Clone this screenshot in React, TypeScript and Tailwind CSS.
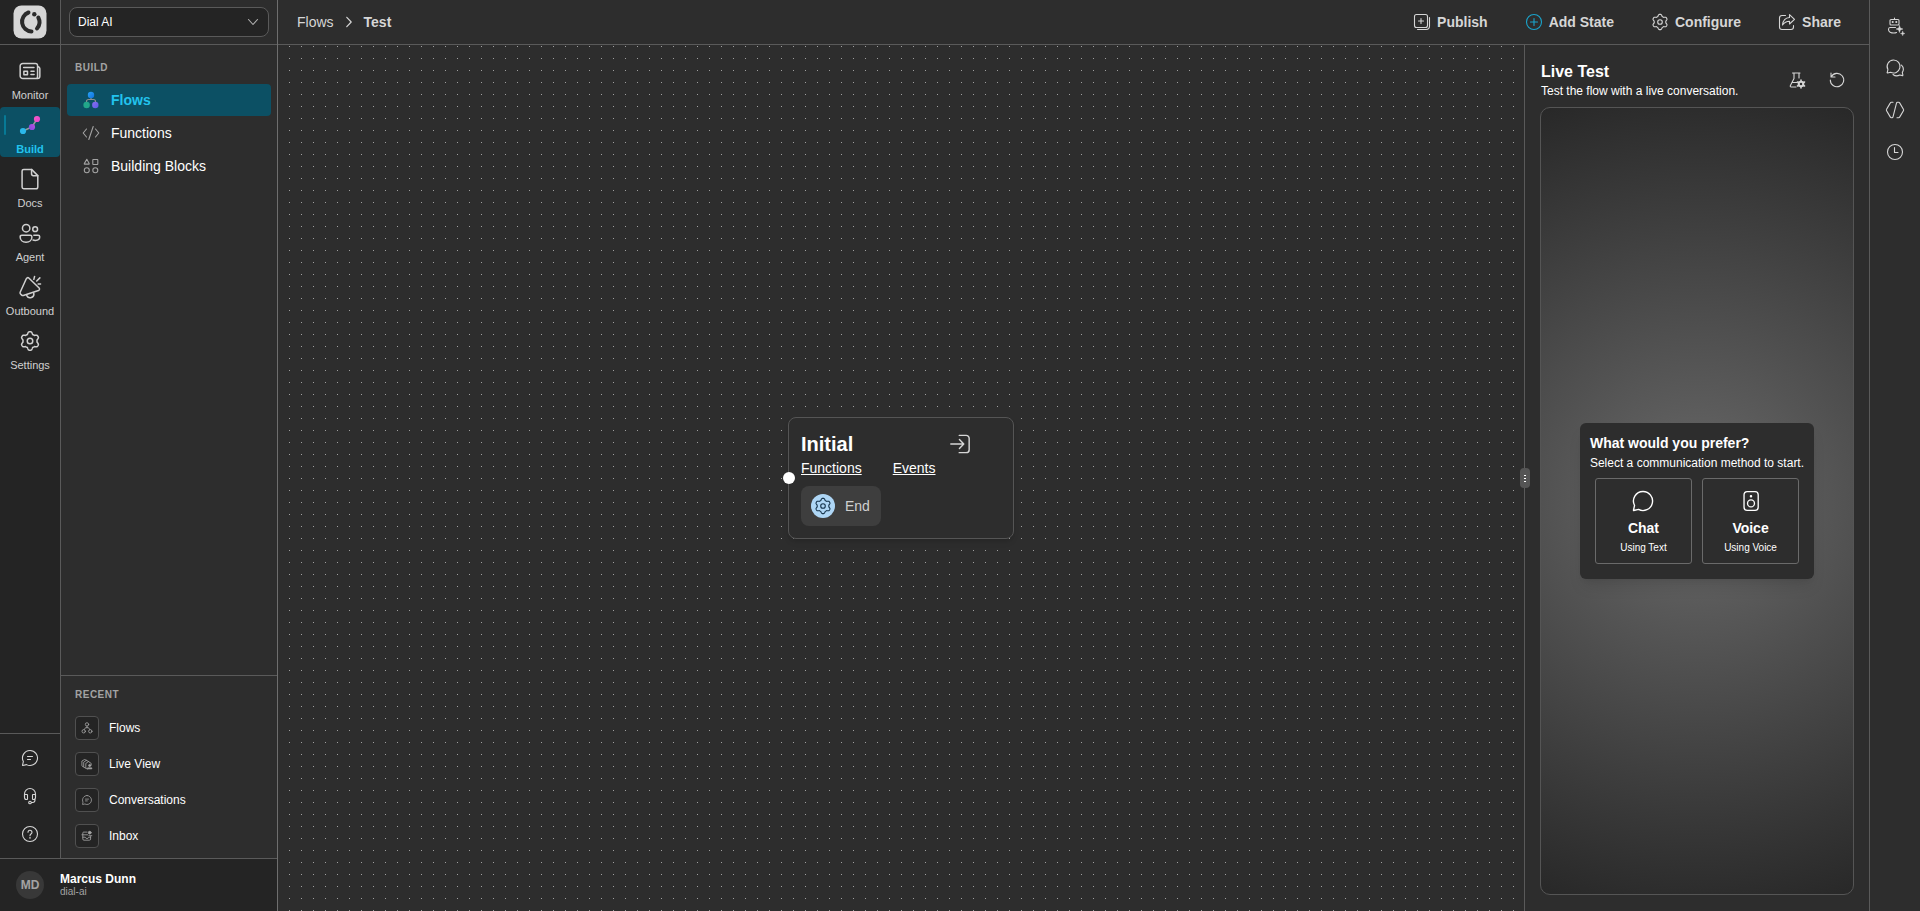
import { ReactNode } from 'react';
import { clsx } from 'clsx';

// six rounded lobes around the centre of a 20x20 box
const GEAR =
  Array.from({ length: 90 }, (_, i) => {
    const angle = (i * 4 * Math.PI) / 180;
    const lobe = Math.max(-1, Math.min(1, -1.5 * Math.cos(6 * angle)));
    const radius = 6.75 + 0.9 * lobe;
    const x = 10 + radius * Math.cos(angle);
    const y = 10 + radius * Math.sin(angle);
    return `${i === 0 ? 'M' : 'L'}${x.toFixed(2)} ${y.toFixed(2)}`;
  }).join('') + 'Z';
const BUBBLE =
  'M10 2.5a7.5 7.5 0 1 1-3.5 14.13l-3.75.86a.2.2 0 0 1-.24-.24l.86-3.75A7.5 7.5 0 0 1 10 2.5Z';

type IconProps = { className?: string; width?: number; children: ReactNode };

function Icon({ className = 'size-5', width = 1.1, children }: IconProps) {
  return (
    <svg
      viewBox="0 0 20 20"
      fill="none"
      stroke="currentColor"
      strokeWidth={width}
      strokeLinecap="round"
      strokeLinejoin="round"
      className={clsx('shrink-0', className)}
      aria-hidden="true"
    >
      {children}
    </svg>
  );
}

function GearIcon({ className, width }: { className?: string; width?: number }) {
  return (
    <Icon className={className} width={width}>
      <path d={GEAR} />
      <circle cx="10" cy="10" r="2.3" />
    </Icon>
  );
}

function BuildIcon() {
  return (
    <svg viewBox="0 0 24 24" className="size-6" aria-hidden="true">
      <defs>
        <linearGradient id="pink" x1="0" y1="0" x2="1" y2="1">
          <stop offset="0" stopColor="#fb5fc4" />
          <stop offset="1" stopColor="#e23fd0" />
        </linearGradient>
        <linearGradient id="violet" x1="0" y1="1" x2="1" y2="0">
          <stop offset="0" stopColor="#7a4be0" />
          <stop offset="1" stopColor="#c04fe0" />
        </linearGradient>
      </defs>
      <path d="M5 18l9-4 5-8" fill="none" stroke="#9a9a9a" strokeWidth="1.5" />
      <circle cx="5" cy="18" r="3.1" fill="#2bb8ea" />
      <circle cx="14" cy="14" r="3.1" fill="url(#violet)" />
      <circle cx="19" cy="6" r="3.1" fill="url(#pink)" />
    </svg>
  );
}

function FlowsIcon() {
  return (
    <svg viewBox="0 0 20 20" className="size-5 shrink-0" aria-hidden="true">
      <defs>
        <linearGradient id="blue" x1="0" y1="0" x2="1" y2="1">
          <stop offset="0" stopColor="#2aa4f4" />
          <stop offset="1" stopColor="#0f6fe0" />
        </linearGradient>
        <linearGradient id="indigo" x1="0" y1="0" x2="1" y2="1">
          <stop offset="0" stopColor="#8a6cf0" />
          <stop offset="1" stopColor="#5b5be6" />
        </linearGradient>
      </defs>
      <path
        d="M10 7v3M5.5 13v-1.5a2 2 0 0 1 2-2h5a2 2 0 0 1 2 2V13"
        fill="none"
        stroke="#8f8f8f"
        strokeWidth="1.2"
      />
      <circle cx="10" cy="5" r="3.2" fill="url(#blue)" />
      <circle cx="5.6" cy="15" r="3.2" fill="#22a68a" />
      <circle cx="14.3" cy="15" r="3.2" fill="url(#indigo)" />
    </svg>
  );
}

const railItems = [
  {
    label: 'Monitor',
    icon: (
      <Icon className="size-6" width={1.25}>
        <path d="M4 3.7h10.5A1.8 1.8 0 0 1 16.3 5.5v9a1.8 1.8 0 0 0 0 1.8H4A2.2 2.2 0 0 1 1.8 14.1V5.9A2.2 2.2 0 0 1 4 3.7ZM16.3 6.3a1.9 1.9 0 0 1 1.9 1.9v6.2a1.9 1.9 0 0 1-1.9 1.9" />
        <path d="M4.7 7h8.6M10.8 10.2h2.6M10.8 13h2.6M4.9 10.2h3v2.9h-3z" />
      </Icon>
    ),
  },
  { label: 'Build', icon: <BuildIcon />, active: true },
  {
    label: 'Docs',
    icon: (
      <Icon className="size-6" width={1.25}>
        <path d="M4.800 2H11.300l5.200 5.200v9.400a1.500 1.500 0 0 1-1.500 1.500H4.800a1.400 1.400 0 0 1-1.400-1.400V3.400A1.400 1.400 0 0 1 4.800 2Z" />
        <path d="M11.300 2v3.800a1.400 1.400 0 0 0 1.400 1.400h3.800" />
      </Icon>
    ),
  },
  {
    label: 'Agent',
    icon: (
      <Icon className="size-6" width={1.25}>
        <circle cx="6.800" cy="6" r="3.100" />
        <circle cx="14.300" cy="6.800" r="2" />
        <path d="M3.300 11.900h6.900c.8 0 1.400.6 1.400 1.400 0 2.600-2 4.400-4.900 4.400s-4.900-1.800-4.900-4.400c0-.8.7-1.400 1.500-1.400Z" />
        <path d="M13.200 11.900h3.500c.8 0 1.400.6 1.400 1.300 0 1.900-1.500 3-3.700 3-.7 0-1.300-.1-1.900-.3" />
      </Icon>
    ),
  },
  {
    label: 'Outbound',
    icon: (
      <Icon className="size-6" width={1.25}>
        <path
          d="M9.500 2.700 18.100 11a1.300 1.300 0 0 1-.5 2.100l-12.700 4.200a1.300 1.300 0 0 1-1.300-.3l-1-1a1.300 1.300 0 0 1-.3-1.400L7.500 3.100a1.300 1.300 0 0 1 2-.4Z"
          transform="translate(-.5 -.2)"
        />
        <path d="M7.300 17.200a3.100 3.100 0 0 0 5.800-2.100M13.200 3.600l.6-2.300M15.600 5l2.600-2.600M16.800 7.400h2" />
      </Icon>
    ),
  },
  { label: 'Settings', icon: <GearIcon className="size-6" width={1.25} /> },
];

const helpItems = [
  {
    label: 'Feedback',
    icon: (
      <Icon>
        <path d={BUBBLE} />
        <path d="M7.5 8.5h5M7.5 11.5h3" />
      </Icon>
    ),
  },
  {
    label: 'Support',
    icon: (
      <Icon>
        <path d="M4.500 11V8a5.500 5.500 0 0 1 11 0v3" />
        <path d="M4.500 8.500H7c.3 0 .5.2.5.5v4a.5.5 0 0 1-.5.5h-.5a2 2 0 0 1-2-2zM15.500 8.500H13a.5.5 0 0 0-.5.5v4c0 .3.2.5.5.5h.5a2 2 0 0 0 2-2zM15 13v1a2.500 2.500 0 0 1-2.500 2.500h-1" />
        <circle cx="10" cy="16.500" r="1.300" />
      </Icon>
    ),
  },
  {
    label: 'Help',
    icon: (
      <Icon>
        <circle cx="10" cy="10" r="7.500" />
        <path d="M8 8.200a2 2 0 1 1 3.200 1.600c-.7.5-1.200 1-1.200 1.900" />
        <circle cx="10" cy="13.800" r=".3" fill="currentColor" />
      </Icon>
    ),
  },
];

const buildLinks = [
  { label: 'Flows', icon: <FlowsIcon />, active: true },
  {
    label: 'Functions',
    icon: (
      <Icon>
        <path d="m5.500 6-3.300 4 3.300 4M14.500 6l3.300 4-3.300 4M12.200 3.500 7.800 16.500" />
      </Icon>
    ),
  },
  {
    label: 'Building Blocks',
    icon: (
      <Icon>
        <path d="M5.800 3.300 8.200 7.600a.3.3 0 0 1-.3.5H3.600a.3.3 0 0 1-.3-.5ZM12.300 3.500h4c.3 0 .5.2.5.5v4a.5.5 0 0 1-.5.5h-4a.5.5 0 0 1-.5-.5V4c0-.3.2-.5.5-.5Z" />
        <circle cx="5.800" cy="14.300" r="2.500" />
        <circle cx="14.300" cy="14.300" r="2.500" />
      </Icon>
    ),
  },
];

const recentLinks = [
  {
    label: 'Flows',
    icon: (
      <Icon className="size-3" width={1.4}>
        <circle cx="10" cy="4" r="2.800" />
        <circle cx="4.500" cy="15.500" r="2.800" />
        <circle cx="15.500" cy="15.500" r="2.800" />
        <path d="M10 7v2.500M5.500 12.500l2-3h5l2 3" />
      </Icon>
    ),
  },
  {
    label: 'Live View',
    icon: (
      <Icon className="size-3" width={1.4}>
        <path d="M4 15 1.500 13V5L6 2.500 9.500 4M7.500 17 4.500 15V7L9 4l4 2M10.500 18.500 8 17V9l4.500-3 4.500 3v2" />
        <circle cx="14.500" cy="12.500" r="1.800" fill="currentColor" />
        <path d="M11.500 16.500h6.500v1.500h-6.500z" fill="currentColor" />
      </Icon>
    ),
  },
  {
    label: 'Conversations',
    icon: (
      <Icon className="size-3" width={1.3}>
        <path d={BUBBLE} />
        <path d="M7.500 8.500h5M7.500 11.500h3" />
      </Icon>
    ),
  },
  {
    label: 'Inbox',
    icon: (
      <Icon className="size-3" width={1.4}>
        <path d="M10 3.500H4.500A1.500 1.500 0 0 0 3 5v10a2 2 0 0 0 2 2h9a2 2 0 0 0 2-2v-4M3 12h4l1.500 2h3L13 12h3M6 8h5M1.500 8H5" />
        <circle cx="14.500" cy="4.500" r="2.300" fill="currentColor" />
        <path d="M13 9.500h5" />
      </Icon>
    ),
  },
];

const headerActions = [
  {
    label: 'Publish',
    icon: (
      <Icon>
        <path d="M4.500 2.500h9a2 2 0 0 1 2 2v9a2 2 0 0 1-2 2h-9a2 2 0 0 1-2-2v-9c0-1.100.9-2 2-2ZM9 6.500v5M6.500 9h5" />
        <path d="M17.500 5.500v8.500a3.500 3.500 0 0 1-3.500 3.500H5.500" />
      </Icon>
    ),
  },
  {
    label: 'Add State',
    icon: (
      <Icon className="size-5 text-[#1aa4cc]">
        <circle cx="10" cy="10" r="7.500" />
        <path d="M10 6.500v7M6.500 10h7" />
      </Icon>
    ),
  },
  { label: 'Configure', icon: <GearIcon /> },
  {
    label: 'Share',
    icon: (
      <Icon>
        <path d="M8.500 3.500H5A2.500 2.500 0 0 0 2.500 6v9A2.500 2.500 0 0 0 5 17.500h9a2.500 2.500 0 0 0 2.500-2.500v-1.500" />
        <path d="M12.500 2.700v2.800C8.500 5.700 6 8.200 5.500 13c1.800-2.600 4-3.800 7-3.800V12l5-4.700Z" />
      </Icon>
    ),
  },
];

const toolItems = [
  {
    label: 'Assistant',
    icon: (
      <Icon>
        <path d="M11.500 16.500c-.6.300-1.500.5-2.500.5-3 0-5.500-1-5.500-3.500 0-1 .6-2 1.500-2h5.500M6 3.500h7a1 1 0 0 1 1 1V8a1 1 0 0 1-1 1H6a1 1 0 0 1-1-1V4.500a1 1 0 0 1 1-1ZM9.500 3.500V2" />
        <circle cx="7.700" cy="6" r=".5" fill="currentColor" />
        <circle cx="11.300" cy="6" r=".5" fill="currentColor" />
        <path
          d="M14.500 9.500l.9 2.600 2.600.9-2.600.9-.9 2.600-.9-2.600-2.600-.9 2.600-.9ZM17.700 15.300l.6 1.600 1.600.6-1.600.6-.6 1.600-.6-1.600-1.600-.6 1.600-.6Z"
          fill="currentColor"
          strokeWidth=".4"
        />
      </Icon>
    ),
  },
  {
    label: 'Chats',
    icon: (
      <Icon>
        <path d="M8.500 2a6.500 6.500 0 1 1-2.900 12.300l-3 .7a.3.3 0 0 1-.4-.4l.7-3A6.500 6.500 0 0 1 8.500 2Z" />
        <path d="M16.500 7.200a5.800 5.800 0 0 1 .8 7.200l.6 2.800a.3.3 0 0 1-.4.4l-2.800-.6A6 6 0 0 1 8 16.500" />
      </Icon>
    ),
  },
  {
    label: 'Variables',
    icon: (
      <Icon>
        <path d="M8 2.300H6.500a1.500 1.500 0 0 0-1.300.8L1.600 9.300a1.300 1.300 0 0 0 0 1.400l3.600 6.200c.3.500.8.800 1.300.8h.5c.5 0 .9-.3 1-.8L11.500 3.100c.1-.5.500-.8 1-.8h1c.5 0 1 .3 1.300.8l3.600 6.200c.3.400.3 1 0 1.400l-3.600 6.200c-.3.500-.8.800-1.300.8H12" />
      </Icon>
    ),
  },
  {
    label: 'History',
    icon: (
      <Icon>
        <circle cx="10" cy="10" r="7.500" />
        <path d="M9.500 5.500v5h3.500" />
      </Icon>
    ),
  },
];

function Logo() {
  return (
    <svg viewBox="0 0 34 34" className="size-[34px]" aria-hidden="true">
      <rect x=".5" y=".5" width="33" height="33" rx="8" fill="#d6d6d6" />
      <g fill="none" stroke="#2b2b2b" strokeWidth="4" strokeLinecap="round">
        <path d="M15.500 7.500A9.800 9.800 0 0 0 18.500 26.500" />
        <path d="M25.300 12.500A9.800 9.800 0 0 1 24 23.500" />
      </g>
      <circle cx="21.300" cy="9.200" r="2.200" fill="#2b2b2b" />
    </svg>
  );
}

function Rail() {
  return (
    <div className="flex w-[61px] flex-col border-r border-[#5a5a5a] bg-[#242424]">
      <a
        href="#home"
        aria-label="Home"
        className="flex h-[45px] items-center justify-center border-b border-[#5a5a5a]"
      >
        <Logo />
      </a>
      <nav className="flex flex-1 flex-col gap-1 pt-2">
        {railItems.map((item) => (
          <a
            key={item.label}
            href={`#${item.label.toLowerCase()}`}
            className={clsx(
              'relative flex h-[50px] flex-col items-center gap-1 rounded pt-1.5 text-[11px] leading-4',
              item.active
                ? 'bg-[#0c5064] font-bold text-[#22c3ee]'
                : 'text-[#d0d0d0]',
            )}
          >
            {item.active && (
              <span className="absolute top-2 left-1 h-5 w-0.5 rounded-full bg-[#077a96]" />
            )}
            {item.icon}
            {item.label}
          </a>
        ))}
      </nav>
      <div className="flex flex-col items-center gap-[18px] border-t border-[#5a5a5a] py-[14px] text-[#d6d6d6]">
        {helpItems.map((item) => (
          <button key={item.label} aria-label={item.label}>
            {item.icon}
          </button>
        ))}
      </div>
    </div>
  );
}

function Sidebar() {
  return (
    <div className="flex flex-1 flex-col">
      <div className="flex h-[45px] items-center border-b border-[#5a5a5a] px-2">
        <div className="relative flex-1">
          <select
            aria-label="Workspace"
            className="h-[30px] w-full appearance-none rounded-lg border border-[#5a5a5a] bg-[#242424] px-2 text-xs text-white"
          >
            <option>Dial AI</option>
          </select>
          <Icon className="pointer-events-none absolute top-[5px] right-[6px] size-5 text-[#b0b0b0]">
            <path d="m5.500 7.500 4.500 5 4.500-5" />
          </Icon>
        </div>
      </div>

      <nav className="flex flex-1 flex-col gap-px px-[6px] pt-[15px]">
        <h2 className="mb-[7px] pl-2 text-[10px] leading-4 font-bold tracking-wider text-[#a3a3a3]">
          BUILD
        </h2>
        {buildLinks.map((link) => (
          <a
            key={link.label}
            href={`#${link.label.toLowerCase()}`}
            className={clsx(
              'flex h-8 items-center gap-[10px] rounded pl-[14px] text-sm',
              link.active && 'bg-[#0c5064] font-bold text-[#22c3ee]',
            )}
          >
            <span className="text-[#a3a3a3]">{link.icon}</span>
            {link.label}
          </a>
        ))}
      </nav>

      <div className="flex flex-col gap-3 border-t border-[#5a5a5a] px-[14px] pt-[11px] pb-[10px]">
        <h2 className="mb-px text-[10px] leading-4 font-bold tracking-wider text-[#a3a3a3]">
          RECENT
        </h2>
        {recentLinks.map((link) => (
          <a
            key={link.label}
            href={`#recent-${link.label.toLowerCase()}`}
            className="flex items-center gap-[10px] text-xs"
          >
            <span className="flex size-6 items-center justify-center rounded border border-[#505050] bg-[#242424] text-[#a3a3a3]">
              {link.icon}
            </span>
            {link.label}
          </a>
        ))}
      </div>
    </div>
  );
}

function Header() {
  return (
    <header className="flex h-[45px] items-center justify-between border-b border-[#5a5a5a] pr-7 pl-[19px] text-sm text-[#d6d6d6]">
      <nav className="flex items-center gap-[5px]">
        <a href="#flows">Flows</a>
        <Icon width={1.2}>
          <path d="m7.800 5.300 4.400 4.700-4.400 4.700" />
        </Icon>
        <strong>Test</strong>
      </nav>
      <div className="flex items-center gap-9">
        {headerActions.map((action) => (
          <button
            key={action.label}
            className="flex items-center gap-[5px] font-bold"
          >
            {action.icon}
            {action.label}
          </button>
        ))}
      </div>
    </header>
  );
}

function Canvas() {
  return (
    <main className="relative flex flex-1 items-center justify-center">
      <svg className="absolute inset-0 size-full" aria-hidden="true">
        <pattern
          id="dots"
          x="11"
          y="1"
          width="12"
          height="12"
          patternUnits="userSpaceOnUse"
        >
          <rect width="1" height="1" fill="#a0a0a0" />
        </pattern>
        <rect width="100%" height="100%" fill="url(#dots)" />
      </svg>

      <section className="relative w-[226px] rounded-lg border border-[#555] bg-[#2d2d2d] px-3 pt-[14px] pb-3 shadow-md">
        <span className="absolute top-1/2 -left-[6px] size-3 -translate-y-1/2 rounded-full bg-white" />
        <div className="flex items-center justify-between">
          <h1 className="text-xl leading-6 font-bold">Initial</h1>
          <button aria-label="Enter state" className="mr-7 text-[#d6d6d6]">
            <Icon className="size-6" width={1.2}>
              <path d="M8.500 2.800h5.800a2.500 2.500 0 0 1 2.500 2.500v9.400a2.500 2.500 0 0 1-2.500 2.500H8.500M1.500 10h10.700M8.700 6.300 12.300 10l-3.600 3.700" />
            </Icon>
          </button>
        </div>
        <div className="mt-0.5 flex gap-[31px] text-sm">
          <a href="#functions" className="underline">
            Functions
          </a>
          <a href="#events" className="underline">
            Events
          </a>
        </div>
        <button className="mt-2 flex h-10 items-center gap-[10px] rounded-lg bg-[#3e3e3e] pr-[11px] pl-[10px] text-sm text-[#d0d0d0]">
          <span className="flex size-6 items-center justify-center rounded-full bg-[#aed6f5] text-[#17354d]">
            <GearIcon />
          </span>
          End
        </button>
      </section>
    </main>
  );
}

const methods = [
  {
    title: 'Chat',
    hint: 'Using Text',
    icon: (
      <Icon className="size-6">
        <path d={BUBBLE} transform="translate(-.6 -.6) scale(1.060)" />
      </Icon>
    ),
  },
  {
    title: 'Voice',
    hint: 'Using Voice',
    icon: (
      <Icon className="size-6">
        <rect x="4.200" y="2.200" width="11.800" height="15.600" rx="2.600" />
        <circle cx="10" cy="12" r="2.900" />
        <circle cx="10" cy="6" r=".5" fill="currentColor" />
      </Icon>
    ),
  },
];

function LiveTest() {
  return (
    <aside className="relative flex w-[345px] flex-col border-l border-[#5a5a5a] px-[15px] py-4">
      <div className="absolute top-1/2 -left-[5px] flex h-5 w-[10px] -translate-y-1/2 flex-col items-center justify-center gap-0.5 rounded bg-[#555]">
        <span className="h-px w-0.5 bg-white" />
        <span className="h-px w-0.5 bg-white" />
        <span className="h-px w-0.5 bg-white" />
      </div>

      <div className="mb-2 flex items-center justify-between pr-[7px] pl-px">
        <div>
          <h2 className="text-base leading-[22px] font-bold">Live Test</h2>
          <p className="text-xs leading-4">
            Test the flow with a live conversation.
          </p>
        </div>
        <div className="flex gap-5 text-[#d6d6d6]">
          <button aria-label="Test settings">
            <Icon>
              <path d="M5.500 3h7.500M7 3v5.500L3.300 15.700a.9.9 0 0 0 .8 1.300H9M12 3v5M5.300 12.500H10" />
              <circle cx="14" cy="14" r="2.300" strokeWidth="2" />
              <path
                d="M14 10v1.500M14 16.500V18M10.500 12l1.300.8M16.200 15.200l1.300.8M10.500 16l1.300-.8M16.200 12.800l1.300-.8"
                strokeWidth="1.600"
              />
            </Icon>
          </button>
          <button aria-label="Restart">
            <Icon>
              <path d="M4.200 6.700a6.700 6.700 0 1 1-.9 3.300M4 3v4h4" />
            </Icon>
          </button>
        </div>
      </div>

      <div className="flex flex-1 items-center justify-center rounded-[10px] border border-[#555] bg-[radial-gradient(circle,#6a6a6a,#282828)]">
        <section className="rounded-md bg-[#2d2d2d] px-[10px] pt-[10px] pb-[15px] shadow-lg">
          <h3 className="text-sm font-bold">What would you prefer?</h3>
          <p className="text-xs leading-5">
            Select a communication method to start.
          </p>
          <div className="mt-[5px] flex gap-[10px] px-[5px]">
            {methods.map((method) => (
              <button
                key={method.title}
                className="flex flex-1 flex-col items-center rounded-[3px] border border-[#6a6a6a] pt-[10px] pb-[5px]"
              >
                {method.icon}
                <strong className="mt-[5px] text-sm">{method.title}</strong>
                <span className="text-[10px] leading-5">{method.hint}</span>
              </button>
            ))}
          </div>
        </section>
      </div>
    </aside>
  );
}

export default function App() {
  return (
    <div className="flex h-screen bg-[#2d2d2d] font-['Liberation_Sans',Arial,sans-serif] text-white">
      <div className="flex w-[278px] flex-col border-r border-[#6e6e6e]">
        <div className="flex flex-1">
          <Rail />
          <Sidebar />
        </div>
        <footer className="flex h-[53px] items-center gap-4 border-t border-[#5a5a5a] bg-[#242424] pl-4">
          <span className="flex size-7 items-center justify-center rounded-full bg-[#383838] text-xs font-bold text-[#a3a3a3]">
            MD
          </span>
          <div>
            <strong className="block text-xs leading-[14px]">
              Marcus Dunn
            </strong>
            <span className="block text-[10px] leading-3 text-[#a3a3a3]">
              dial-ai
            </span>
          </div>
        </footer>
      </div>

      <div className="flex flex-1 flex-col">
        <Header />
        <div className="flex flex-1">
          <Canvas />
          <LiveTest />
        </div>
      </div>

      <nav className="flex w-[51px] flex-col items-center gap-[22px] border-l border-[#5a5a5a] pt-4 text-[#d6d6d6]">
        {toolItems.map((item) => (
          <button key={item.label} aria-label={item.label}>
            {item.icon}
          </button>
        ))}
      </nav>
    </div>
  );
}
